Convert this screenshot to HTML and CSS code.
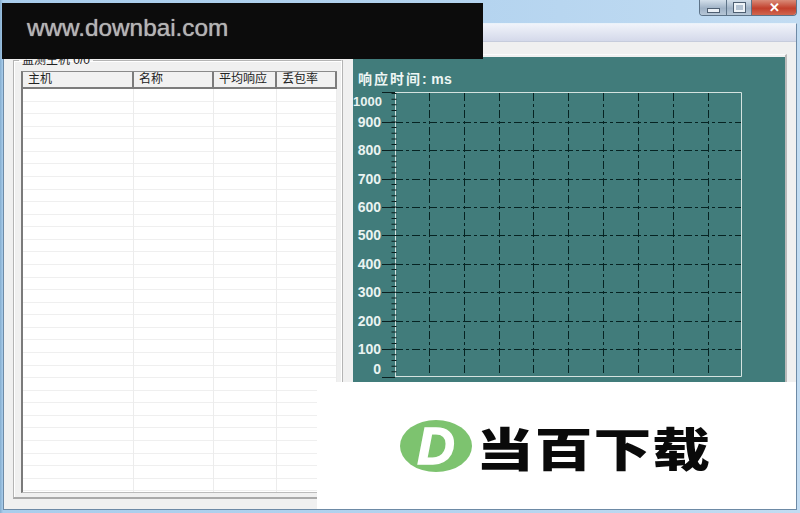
FILE: index.html
```html
<!DOCTYPE html>
<html lang="zh-CN">
<head>
  <meta charset="UTF-8">
  <title>监测主机</title>
  <link rel="stylesheet" href="styles.css">
</head>
<body>
  <div class="titlebar">
    <div class="caption-buttons">
      <div class="cap-btn cap-min"><span class="min-glyph"></span></div>
      <div class="cap-btn cap-max"><span class="max-glyph"></span></div>
      <div class="cap-btn cap-close">✕</div>
    </div>
  </div>

  <div class="client">
    <div class="menubar"></div>
    <div class="content">
      <fieldset class="hosts">
        <legend>监测主机 0/0</legend>
        <div class="list">
          <div class="list-head">
            <div class="col col-host">主机</div>
            <div class="col col-name">名称</div>
            <div class="col col-avg">平均响应</div>
            <div class="col col-loss">丢包率</div>
          </div>
          <div class="list-body">
            <div class="col col-host"></div>
            <div class="col col-name"></div>
            <div class="col col-avg"></div>
            <div class="col col-loss"></div>
          </div>
        </div>
      </fieldset>

      <div class="chart-wrap">
        <div class="chart">
          <svg class="chart-svg" viewBox="353 57 432 441" width="432" height="441">
            <text class="chart-title" x="358" y="84">响应时间<tspan class="chart-unit">: ms</tspan></text>

            <g class="labels">
              <text class="label-wide" x="382" y="106">1000</text>
              <text x="381" y="127">900</text>
              <text x="381" y="155">800</text>
              <text x="381" y="184">700</text>
              <text x="381" y="212">600</text>
              <text x="381" y="240">500</text>
              <text x="381" y="269">400</text>
              <text x="381" y="297">300</text>
              <text x="381" y="326">200</text>
              <text x="381" y="354">100</text>
              <text x="381" y="374">0</text>
            </g>

            <path class="plot-edge" d="M395 92.5H741.5V376.5H395"/>

            <g class="grid">
              <line x1="395" y1="122.5" x2="741" y2="122.5"/>
              <line x1="395" y1="150.5" x2="741" y2="150.5"/>
              <line x1="395" y1="179.5" x2="741" y2="179.5"/>
              <line x1="395" y1="207.5" x2="741" y2="207.5"/>
              <line x1="395" y1="235.5" x2="741" y2="235.5"/>
              <line x1="395" y1="264.5" x2="741" y2="264.5"/>
              <line x1="395" y1="292.5" x2="741" y2="292.5"/>
              <line x1="395" y1="321.5" x2="741" y2="321.5"/>
              <line x1="395" y1="349.5" x2="741" y2="349.5"/>
              <line x1="429.5" y1="93" x2="429.5" y2="376"/>
              <line x1="464.5" y1="93" x2="464.5" y2="376"/>
              <line x1="499.5" y1="93" x2="499.5" y2="376"/>
              <line x1="533.5" y1="93" x2="533.5" y2="376"/>
              <line x1="568.5" y1="93" x2="568.5" y2="376"/>
              <line x1="603.5" y1="93" x2="603.5" y2="376"/>
              <line x1="638.5" y1="93" x2="638.5" y2="376"/>
              <line x1="673.5" y1="93" x2="673.5" y2="376"/>
              <line x1="708.5" y1="93" x2="708.5" y2="376"/>
            </g>

            <line class="axis" x1="395.5" y1="93" x2="395.5" y2="377"/>
            <line class="minor" x1="394" y1="93" x2="394" y2="377"/>
            <path class="major" d="M382 92.5H395M382 122.5H395M382 150.5H395M382 179.5H395M382 207.5H395M382 235.5H395M382 264.5H395M382 292.5H395M382 321.5H395M382 349.5H395M382 377.5H395"/>
          </svg>
        </div>
      </div>
    </div>
  </div>

  <!-- watermark strips pasted over the screenshot -->
  <div class="site-banner">www.downbai.com</div>
  <div class="logo-strip">
    <div class="logo-mark">D</div>
    <div class="logo-name">当百下载</div>
  </div>
</body>
</html>
```

FILE: styles.css
```css
html, body {
  margin: 0;
  padding: 0;
}

body {
  position: relative;
  width: 800px;
  height: 513px;
  overflow: hidden;
  font-family: "Liberation Sans", "Noto Sans CJK SC", sans-serif;
  background: linear-gradient(90deg, #86aed0 0, #a9cdec 3px, #b3d3ef 55%, #c2dcf2 100%);
}

.titlebar {
  height: 23px;
  display: flex;
  justify-content: flex-end;
  padding-right: 3px;
  box-sizing: border-box;
}

.caption-buttons {
  display: flex;
  height: 15px;
  border: 1px solid #5d7388;
  border-top: none;
  border-radius: 0 0 4px 4px;
  overflow: hidden;
}

.cap-btn {
  display: flex;
  align-items: center;
  justify-content: center;
  box-sizing: border-box;
}

.cap-min {
  width: 27px;
  background: linear-gradient(#d3dfeb, #9fb2c6 55%, #b6c6d6);
  border-right: 1px solid #5d7388;
}

.cap-max {
  width: 25px;
  background: linear-gradient(#d3dfeb, #9fb2c6 55%, #b6c6d6);
  border-right: 1px solid #5d7388;
}

.cap-close {
  width: 44px;
  color: #fff;
  font-size: 13px;
  font-weight: bold;
  background: linear-gradient(#d98b78, #c2402c 55%, #d0664f);
}

.min-glyph {
  width: 11px;
  height: 3px;
  margin-top: 5px;
  background: #e9eff5;
  border: 1px solid #4e5f72;
}

.max-glyph {
  width: 7px;
  height: 5px;
  background: #b3c2d2;
  border: 2px solid #eef3f8;
  outline: 1px solid #4e5f72;
}

.client {
  margin: 0 3px;
  height: 487px;
  box-sizing: border-box;
  border: 1px solid #6d8aa6;
  border-top: 1px solid #e9f2fa;
  background: #f0f0f0;
}

.menubar {
  height: 17px;
  background: linear-gradient(#f0f3fa, #d4d9ea);
  border-bottom: 1px solid #c6ccdc;
}

.content {
  display: flex;
  align-items: flex-start;
  padding-left: 9px;
}

/* left group */
.hosts {
  width: 329px;
  height: 445px;
  margin: 12px 0 0;
  padding: 0 4px 5px 7px;
  box-sizing: border-box;
  min-width: 0;
  border: 1px solid #b4b4b4;
  border-right-color: #fff;
  border-bottom: 2px solid #a9a9a9;
  box-shadow: inset 1px 1px 0 #fff, 1px 0 0 #b4b4b4;
  background: #f0f0f0;
}

.hosts legend {
  margin-left: -2px;
  padding: 0 3px;
  font-size: 12px;
  line-height: 12px;
  color: #222;
}

.list {
  height: 422px;
  margin-top: 5px;
  display: flex;
  flex-direction: column;
  box-sizing: border-box;
  border-left: 2px solid #7a7a7a;
  border-top: 1px solid #8a8a8a;
  border-bottom: 1px solid #bbb;
  background: #fff;
}

.list-head {
  display: flex;
  height: 15px;
  flex: none;
  background: #f1f1f1;
  border-bottom: 2px solid #7c7c7c;
  font-size: 12px;
  line-height: 15px;
  color: #222;
}

.list-head .col {
  padding-left: 5px;
  box-sizing: border-box;
  border-right: 2px solid #7c7c7c;
}

.col-host { width: 111px; }
.col-name { width: 80px; }
.col-avg { width: 63px; }
.col-loss { width: 60px; }

.list-body {
  flex: 1;
  display: flex;
  background: repeating-linear-gradient(#fff 0, #fff 11.57px, #efefef 11.57px, #efefef 12.57px);
}

.list-body .col {
  box-sizing: border-box;
  border-right: 1px solid #ececec;
}

/* right panel */
.chart-wrap {
  margin: 12px 0 0 11px;
  border-top: 1px solid #fbfbfb;
  border-right: 2px solid #b9b9b9;
  padding-top: 2px;
}

.chart {
  width: 432px;
  height: 441px;
  background: #417c7b;
}

.chart-svg {
  display: block;
}

.chart-title {
  font-family: "Liberation Sans", "Noto Sans CJK SC", sans-serif;
  font-size: 14px;
  font-weight: bold;
  letter-spacing: 2px;
  fill: #eef6f4;
}

.chart-unit {
  letter-spacing: 0.3px;
}

.labels text {
  font-family: "Liberation Sans", sans-serif;
  font-size: 14px;
  font-weight: bold;
  text-anchor: end;
  fill: #eaf3f1;
}

.labels .label-wide {
  font-size: 13px;
}

.plot-edge {
  fill: none;
  stroke: #d5e3e0;
  stroke-width: 1;
}

.grid line {
  stroke: #062322;
  stroke-width: 1;
  stroke-dasharray: 8 3 3 3;
}

.axis {
  stroke: #d5e3e0;
  stroke-width: 1;
}

.minor {
  stroke: #0a1f1f;
  stroke-width: 5;
  stroke-dasharray: 1 4.68;
}

.major {
  fill: none;
  stroke: #0a1f1f;
  stroke-width: 1;
}

/* watermarks */
.site-banner {
  position: absolute;
  left: 2px;
  top: 3px;
  width: 481px;
  height: 56px;
  padding-left: 25px;
  box-sizing: border-box;
  background: #0c0c0c;
  color: #b4b4b4;
  font-size: 24.3px;
  line-height: 50px;
  text-shadow: 0 0 1px #b4b4b4;
}

.logo-strip {
  position: absolute;
  left: 317px;
  top: 382px;
  width: 479px;
  height: 127px;
  display: flex;
  align-items: center;
  padding-left: 83px;
  box-sizing: border-box;
  background: #fff;
}

.logo-mark {
  width: 72px;
  height: 52px;
  flex: none;
  border-radius: 50%;
  background: #7dc36f;
  color: #fff;
  font-size: 52px;
  line-height: 52px;
  font-weight: bold;
  font-style: italic;
  text-align: center;
  -webkit-text-stroke: 1.5px #fff;
}

.logo-name {
  margin-left: 4px;
  font-family: "Noto Sans CJK SC", sans-serif;
  font-size: 56px;
  line-height: 56px;
  font-weight: 900;
  letter-spacing: 1px;
  color: #0a0a0a;
  white-space: nowrap;
  transform: scale(1.03, 0.82);
  transform-origin: left center;
}
```
